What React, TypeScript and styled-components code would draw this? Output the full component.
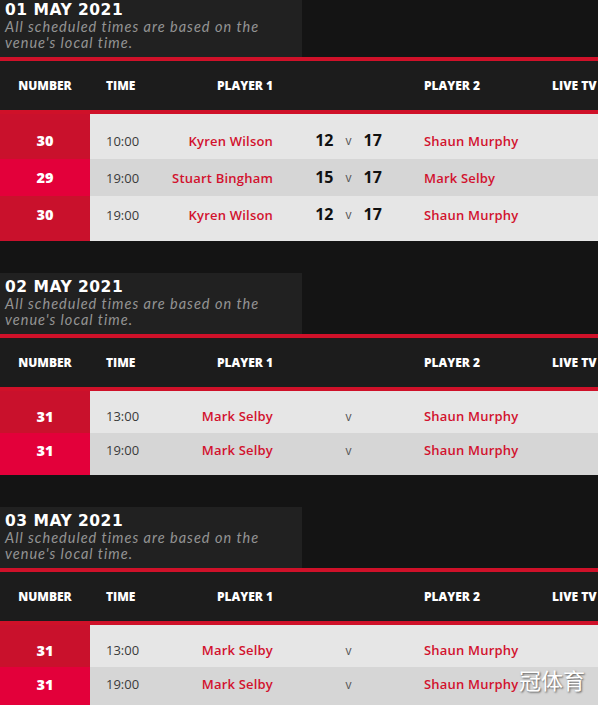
import React from 'react';
import styled, { createGlobalStyle } from 'styled-components';

type Match = {
  num: number;
  time: string;
  p1: string;
  p2: string;
  s1?: number;
  s2?: number;
};

type Day = {
  date: string;
  matches: Match[];
};

const days: Day[] = [
  {
    date: '01 MAY 2021',
    matches: [
      { num: 30, time: '10:00', p1: 'Kyren Wilson', s1: 12, s2: 17, p2: 'Shaun Murphy' },
      { num: 29, time: '19:00', p1: 'Stuart Bingham', s1: 15, s2: 17, p2: 'Mark Selby' },
      { num: 30, time: '19:00', p1: 'Kyren Wilson', s1: 12, s2: 17, p2: 'Shaun Murphy' },
    ],
  },
  {
    date: '02 MAY 2021',
    matches: [
      { num: 31, time: '13:00', p1: 'Mark Selby', p2: 'Shaun Murphy' },
      { num: 31, time: '19:00', p1: 'Mark Selby', p2: 'Shaun Murphy' },
    ],
  },
  {
    date: '03 MAY 2021',
    matches: [
      { num: 31, time: '13:00', p1: 'Mark Selby', p2: 'Shaun Murphy' },
      { num: 31, time: '19:00', p1: 'Mark Selby', p2: 'Shaun Murphy' },
    ],
  },
];

const RED = '#cf1129';

function Schedule() {
  return (
    <Page>
      <GlobalStyle />
      {days.map((day) => (
        <Section key={day.date}>
          <DayInfo>
            <DayTitle>{day.date}</DayTitle>
            <Note>All scheduled times are based on the venue's local time.</Note>
          </DayInfo>
          <Table>
            <HeadRow>
              <Th $align="center">NUMBER</Th>
              <Th $indent>TIME</Th>
              <Th $align="right">PLAYER 1</Th>
              <Th />
              <Th>PLAYER 2</Th>
              <Th>LIVE TV</Th>
            </HeadRow>
            {day.matches.map((m, i) => (
              <Row
                key={i}
                $alt={i % 2 === 1}
                $first={i === 0}
                $last={i === day.matches.length - 1}
              >
                <Num $alt={i % 2 === 1}>{m.num}</Num>
                <Time>{m.time}</Time>
                <Player $right>{m.p1}</Player>
                <Score>
                  {m.s1 !== undefined && <Frames>{m.s1}</Frames>}
                  <Versus>v</Versus>
                  {m.s2 !== undefined && <Frames>{m.s2}</Frames>}
                </Score>
                <Player>{m.p2}</Player>
                <Cell />
              </Row>
            ))}
          </Table>
        </Section>
      ))}
      <Watermark>冠体育</Watermark>
    </Page>
  );
}

const GlobalStyle = createGlobalStyle`
  html, body {
    margin: 0;
    padding: 0;
    background: #141414;
  }
  body {
    font-family: "Open Sans", "Liberation Sans", sans-serif;
  }
`;

const Page = styled.div`
  position: relative;
  width: 598px;
  height: 705px;
  overflow: hidden;
  background: #141414;
`;

const Section = styled.section`
  margin-bottom: 32px;

  &:first-of-type {
    margin-top: -4px;
  }
`;

const DayInfo = styled.div`
  width: 302px;
  box-sizing: border-box;
  padding: 5px 5px 6px;
  background: #212121;
`;

const DayTitle = styled.h2`
  margin: 0;
  font-family: "DejaVu Sans", sans-serif;
  font-weight: 900;
  font-size: 15.5px;
  line-height: 18px;
  letter-spacing: 0.5px;
  color: #fff;
`;

const Note = styled.p`
  margin: 0;
  width: 268px;
  font-family: Lato, "Open Sans", sans-serif;
  font-style: italic;
  font-size: 14.5px;
  line-height: 16px;
  letter-spacing: 1px;
  color: #949494;
`;

const Table = styled.div`
  border-top: 4px solid ${RED};
`;

const columns = '90px 73px 110px 151px 128px 1fr';

const HeadRow = styled.div`
  display: grid;
  grid-template-columns: ${columns};
  height: 49px;
  align-items: center;
  background: #1c1c1c;
  border-bottom: 4px solid ${RED};
`;

const Th = styled.div<{ $align?: 'left' | 'center' | 'right'; $indent?: boolean }>`
  font-weight: 800;
  font-size: 12px;
  color: #fff;
  white-space: nowrap;
  text-align: ${(p) => p.$align || 'left'};
  padding-left: ${(p) => (p.$indent ? '16px' : '0')};
`;

const Row = styled.div<{ $alt: boolean; $first: boolean; $last: boolean }>`
  display: grid;
  grid-template-columns: ${columns};
  background: ${(p) => (p.$alt ? '#d6d6d6' : '#e6e6e6')};

  & > * {
    padding-top: ${(p) => (p.$first ? '8px' : '0')};
    padding-bottom: ${(p) => (p.$last ? '8px' : '0')};
  }
`;

const Cell = styled.div`
  display: flex;
  align-items: center;
  min-height: 34px;
`;

const Num = styled(Cell)<{ $alt: boolean }>`
  justify-content: center;
  background: ${(p) => (p.$alt ? '#e3003a' : '#c9112c')};
  color: #fff;
  font-weight: 800;
  font-size: 14.5px;
`;

const Time = styled(Cell)`
  padding-left: 16px;
  font-size: 13px;
  font-weight: 400;
  color: #3a3a3a;
`;

const Player = styled(Cell)<{ $right?: boolean }>`
  justify-content: ${(p) => (p.$right ? 'flex-end' : 'flex-start')};
  font-size: 13px;
  font-weight: 600;
  letter-spacing: 0.2px;
  color: #d2122e;
  white-space: nowrap;
`;

const Score = styled(Cell)`
  justify-content: center;
  gap: 12px;
`;

const Frames = styled.span`
  font-size: 16px;
  font-weight: 700;
  line-height: 37px;
  color: #111;
`;

const Versus = styled.span`
  font-size: 12px;
  color: #555;
`;

const Watermark = styled.div`
  position: absolute;
  left: 519px;
  top: 663px;
  font-family: "Noto Sans CJK SC", sans-serif;
  font-size: 22px;
  color: #fff;
  text-shadow: 1px 1px 2px rgba(0, 0, 0, 0.6);
`;

export default Schedule;
